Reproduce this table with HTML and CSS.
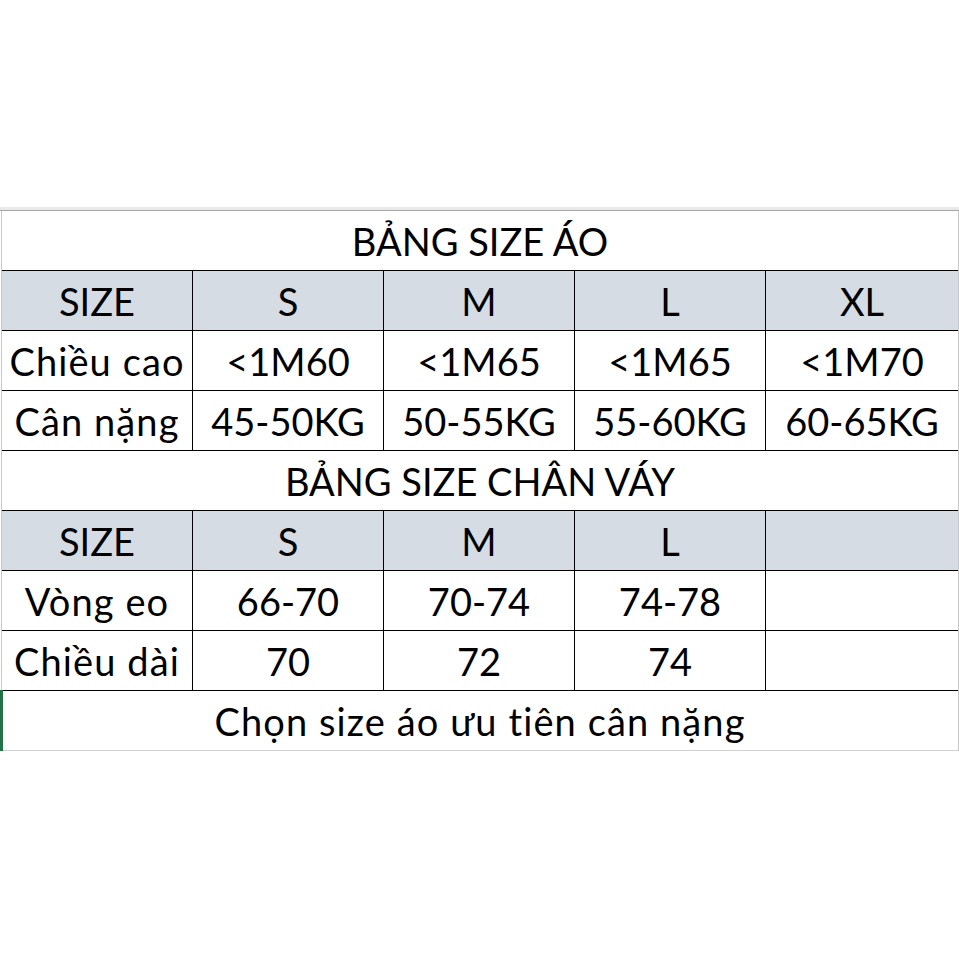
FILE: index.html
```html
<!DOCTYPE html>
<html lang="vi">
<head>
<meta charset="utf-8">
<title>Bảng size</title>
<link rel="stylesheet" href="styles.css">
</head>
<body>
<div class="page">
  <div class="colbar"></div>
  <div class="sheet">
    <div class="row title">BẢNG SIZE ÁO</div>
    <div class="row grid head">
      <div class="cell">SIZE</div>
      <div class="cell">S</div>
      <div class="cell">M</div>
      <div class="cell">L</div>
      <div class="cell last">XL</div>
    </div>
    <div class="row grid">
      <div class="cell lc">Chiều cao</div>
      <div class="cell">&lt;1M60</div>
      <div class="cell">&lt;1M65</div>
      <div class="cell">&lt;1M65</div>
      <div class="cell last">&lt;1M70</div>
    </div>
    <div class="row grid">
      <div class="cell lc">Cân nặng</div>
      <div class="cell">45-50KG</div>
      <div class="cell">50-55KG</div>
      <div class="cell">55-60KG</div>
      <div class="cell last">60-65KG</div>
    </div>
    <div class="row title">BẢNG SIZE CHÂN VÁY</div>
    <div class="row grid head">
      <div class="cell">SIZE</div>
      <div class="cell">S</div>
      <div class="cell">M</div>
      <div class="cell">L</div>
      <div class="cell last"></div>
    </div>
    <div class="row grid">
      <div class="cell lc">Vòng eo</div>
      <div class="cell">66-70</div>
      <div class="cell">70-74</div>
      <div class="cell">74-78</div>
      <div class="cell last"></div>
    </div>
    <div class="row grid">
      <div class="cell lc">Chiều dài</div>
      <div class="cell">70</div>
      <div class="cell">72</div>
      <div class="cell">74</div>
      <div class="cell last"></div>
    </div>
    <div class="row title footer lc">Chọn size áo ưu tiên cân nặng</div>
  </div>
</div>
</body>
</html>
```

FILE: styles.css
```css
html, body {
  margin: 0;
  padding: 0;
  background: #ffffff;
}

.page {
  padding-top: 207px;
  width: 959px;
}

.colbar {
  height: 3px;
  background: #e9e9e9;
  border-bottom: 1px solid #a6a6a6;
}

.sheet {
  margin-left: 1px;
  width: 956px;
  border-left: 1px solid #c8c8c8;
  border-right: 1px solid #c8c8c8;
  font-family: "Lato", "Open Sans", sans-serif;
  font-size: 38px;
  color: #000;
}

.row {
  height: 59px;
  border-bottom: 1px solid #000;
}

.title {
  display: flex;
  align-items: center;
  justify-content: center;
}

.footer {
  position: relative;
  border-bottom: 1px solid #d0d0d0;
}

.footer::before {
  content: "";
  position: absolute;
  left: -2px;
  top: -1px;
  bottom: -1px;
  width: 3px;
  background: #217346;
}

.grid {
  display: grid;
  grid-template-columns: 191px 191px 191px 191px 192px;
}

.head {
  background: #d6dce4;
}

.cell {
  display: flex;
  align-items: center;
  justify-content: center;
  border-right: 1px solid #000;
  white-space: nowrap;
}

.cell.last {
  border-right: none;
}

.lc {
  letter-spacing: 1.1px;
}
```
